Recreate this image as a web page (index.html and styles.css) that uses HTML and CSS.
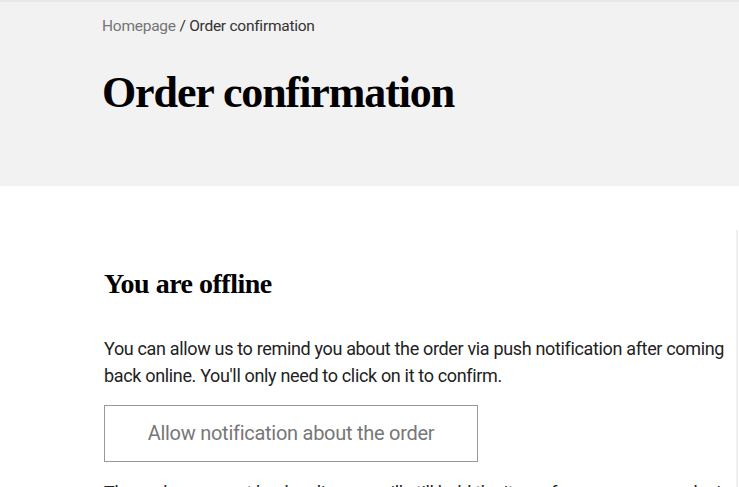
FILE: index.html
```html
<!DOCTYPE html>
<html lang="en">
<head>
  <meta charset="UTF-8" />
  <meta name="viewport" content="width=device-width, initial-scale=1.0" />
  <title>Order confirmation</title>
  <link rel="stylesheet" href="styles.css">
</head>

<body>
  <!-- PAGE HEADER -->
  <header class="page-header">
    <nav class="breadcrumb">
      <a href="#">Homepage</a> / <span>Order confirmation</span>
    </nav>
    <h1>Order confirmation</h1>
  </header>

  <!-- CONTENT -->
  <main class="content">
    <section class="card">
      <h2>You are offline</h2>
      <p>You can allow us to remind you about the order via push notification after coming back online. You'll only need to click on it to confirm.</p>
      <button class="btn-outline">Allow notification about the order</button>
      <p>Then, when you get back online, we will still hold the items for you, so your order is safe until you confirm it.</p>
    </section>
  </main>
</body>
</html>
```

FILE: styles.css
```css
html, body {
  overflow: hidden;
}

body {
  margin: 0;
  font-family: Roboto, "Liberation Sans", sans-serif;
  color: #222;
  background: #fff;
}

/* HEADER */
.page-header {
  background: #f2f2f2;
  border-top: 2px solid #e8e8e8;
  padding: 14px 102px 71px;
}

.breadcrumb {
  font-size: 15.5px;
  line-height: 20px;
  letter-spacing: -0.25px;
  color: #333;
}

.breadcrumb a {
  color: #757575;
  text-decoration: none;
}

.page-header h1 {
  margin: 35px 0 0;
  font-family: "Liberation Serif", serif;
  font-size: 44px;
  line-height: 1;
  letter-spacing: -1.1px;
  font-weight: bold;
  color: #000;
}

/* CONTENT */
.content {
  padding-top: 44px;
}

.card {
  margin-right: 1px;
  border-right: 2px solid #efefef;
  padding: 37px 0 0 104px;
}

.card h2 {
  margin: 0 0 34px;
  font-family: "Liberation Serif", serif;
  font-size: 28px;
  line-height: 1.2;
  letter-spacing: -0.5px;
  color: #000;
}

.card p {
  margin: 0;
  max-width: 628px;
  font-size: 18px;
  line-height: 27px;
  letter-spacing: -0.34px;
  color: #222;
}

.btn-outline {
  display: block;
  margin: 16px 0 17px;
  width: 374px;
  height: 57px;
  background: #fff;
  border: 1px solid #999;
  font-family: Roboto, "Liberation Sans", sans-serif;
  font-size: 20px;
  letter-spacing: -0.27px;
  color: #777;
  cursor: pointer;
}
```
